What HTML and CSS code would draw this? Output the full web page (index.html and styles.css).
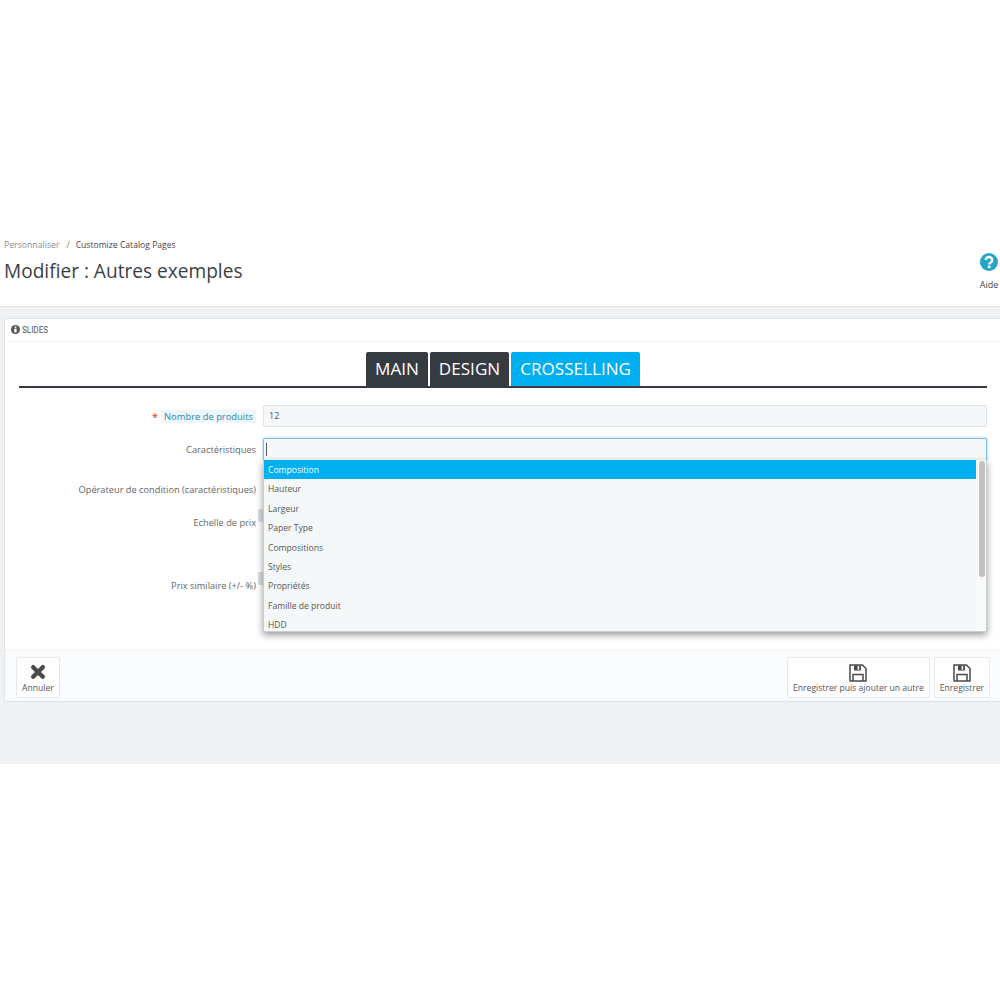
FILE: index.html
```html
<!DOCTYPE html>
<html lang="fr">
<head>
<meta charset="utf-8">
<title>Modifier : Autres exemples</title>
<link rel="stylesheet" href="styles.css">
</head>
<body>
<div class="top-space"></div>
<header class="page-head">
  <div class="head-text">
    <div class="crumbs"><span class="crumb-a">Personnaliser</span><span class="crumb-sep">/</span><span class="crumb-b">Customize Catalog Pages</span></div>
    <h1>Modifier : Autres exemples</h1>
  </div>
  <div class="help">
    <svg class="help-icon" viewBox="0 0 18 18"><circle cx="9" cy="9" r="9" fill="#25a5c7"/><path d="M5.8 7a3.2 3 0 1 1 4.9 2.5c-1.1.7-1.5 1.1-1.5 2.1" fill="none" stroke="#fff" stroke-width="2.4"/><rect x="7.9" y="12.6" width="2.6" height="2.5" fill="#fff"/></svg>
    <span>Aide</span>
  </div>
</header>
<main class="content">
  <section class="panel">
    <div class="panel-head">
      <svg class="info" viewBox="0 0 10 10"><circle cx="5" cy="5" r="5" fill="#555"/><rect x="4" y="1.6" width="2" height="1.6" fill="#fff"/><rect x="3.6" y="4" width="2.6" height="4.2" fill="#fff"/></svg>
      <span class="panel-title">SLIDES</span>
    </div>
    <div class="tabs">
      <div class="tab">MAIN</div>
      <div class="tab">DESIGN</div>
      <div class="tab tab-on">CROSSELLING</div>
    </div>
    <div class="form">
      <div class="row row-1">
        <div class="label"><span class="req">*</span><span class="hint">Nombre de produits</span></div>
        <div class="input">12</div>
      </div>
      <div class="row row-2">
        <div class="label">Caractéristiques</div>
        <div class="field">
          <div class="input focus"><span class="caret"></span></div>
          <div class="dropdown">
            <ul class="options">
              <li class="opt-on">Composition</li>
              <li>Hauteur</li>
              <li>Largeur</li>
              <li>Paper Type</li>
              <li>Compositions</li>
              <li>Styles</li>
              <li>Propriétés</li>
              <li>Famille de produit</li>
              <li>HDD</li>
            </ul>
            <div class="scroll"><div class="thumb"></div></div>
          </div>
        </div>
      </div>
      <div class="row row-3"><div class="label">Opérateur de condition (caractéristiques)</div></div>
      <div class="row row-4"><div class="label">Echelle de prix</div><div class="nub"></div></div>
      <div class="row row-5"><div class="label">Prix similaire (+/- %)</div><div class="nub"></div></div>
    </div>
    <footer class="panel-foot">
      <div class="btn">
        <svg class="ico-x" viewBox="0 0 16 16"><path d="M3.2 3.2 12.8 12.8M12.8 3.2 3.2 12.8" stroke="#4a4a4a" stroke-width="4.4" stroke-linecap="round"/></svg>
        <span>Annuler</span>
      </div>
      <div class="btn-group">
        <div class="btn">
          <svg class="ico-save" viewBox="0 0 18 18"><path d="M1 1H13.5L17 4.5V17H1Z" fill="none" stroke="#4a4a4a" stroke-width="1.5"/><path d="M5 1.5H12V6.5H5Z" fill="#4a4a4a"/><rect x="8.6" y="2.2" width="1.6" height="3.4" fill="#fff"/><path d="M4 17V10.5H14V17" fill="none" stroke="#4a4a4a" stroke-width="1.5"/></svg>
          <span>Enregistrer puis ajouter un autre</span>
        </div>
        <div class="btn">
          <svg class="ico-save" viewBox="0 0 18 18"><path d="M1 1H13.5L17 4.5V17H1Z" fill="none" stroke="#4a4a4a" stroke-width="1.5"/><path d="M5 1.5H12V6.5H5Z" fill="#4a4a4a"/><rect x="8.6" y="2.2" width="1.6" height="3.4" fill="#fff"/><path d="M4 17V10.5H14V17" fill="none" stroke="#4a4a4a" stroke-width="1.5"/></svg>
          <span>Enregistrer</span>
        </div>
      </div>
    </footer>
  </section>
</main>
</body>
</html>
```
FILE: styles.css
```css
* { box-sizing: border-box; }
html, body { margin: 0; padding: 0; background: #fff; }
body { font-family: "Open Sans", "Noto Sans", sans-serif; color: #555; font-size: 9px; height: 1000px; overflow: hidden; }
.top-space { height: 238px; }
.page-head { height: 68px; display: flex; justify-content: space-between; padding: 0 1px 0 4px; }
.crumbs { font-size: 8.7px; line-height: 14px; display: flex; }
.crumb-a { color: #8a8a8a; }
.crumb-sep { color: #5a9a4a; margin: 0 6px 0 7px; }
.crumb-b { color: #444; font-size: 8.6px; }
h1 { margin: 5px 0 0; font-weight: 400; font-size: 19.1px; line-height: 28px; color: #3a3f44; }
.help { width: 20px; display: flex; flex-direction: column; align-items: center; padding-top: 15px; color: #444; font-size: 9px; }
.help-icon { width: 18px; height: 18px; display: block; margin-bottom: 7px; }
.content { background: #eff1f2; border-top: 1px solid #e4e6e8; height: 458px; padding: 11px 0 0 4px; }
.panel { background: #fff; border: 1px solid #dfe2e4; border-right: 0; border-radius: 3px 0 0 3px; height: 384px; display: flex; flex-direction: column; }
.panel-head { height: 23px; margin-left: 3px; border-bottom: 1px solid #f1f2f3; display: flex; align-items: center; gap: 2px; padding: 0 0 2px 3px; }
.panel-title { font-family: "Roboto", sans-serif; font-size: 9.5px; color: #555; transform: scaleX(.85); transform-origin: left center; }
.info { width: 9px; height: 9px; display: block; }
.tabs { height: 46px; margin: 0 13px 0 14px; border-bottom: 2px solid #363a41; display: flex; justify-content: center; align-items: flex-end; gap: 2px; }
.tab { height: 34px; background: #363a41; color: #fff; font-size: 17.1px; line-height: 34px; padding: 0 9px; border-radius: 2px 2px 0 0; }
.tab-on { background: #00aff0; }
.form { flex: 1; padding-right: 13px; }
.row { display: flex; }
.label { width: 251px; text-align: right; color: #666; font-size: 9.25px; flex: none; }
.row-1 { margin-top: 17px; height: 22px; align-items: center; }
.row-1 .label { display: flex; justify-content: flex-end; align-items: center; }
.req { color: #e0262e; font-size: 11px; margin-right: 3px; }
.hint { background: #eef6fa; color: #2a8ab5; padding: 0 3px; line-height: 13px; font-size: 9.4px; }
.input { flex: 1; height: 22px; background: #f5f8f9; border: 1px solid #dbe2e6; border-radius: 2px; margin-left: 7px; padding-left: 5px; line-height: 20px; font-size: 9px; color: #555; }
.row-2 { margin-top: 11px; height: 22px; align-items: flex-start; }
.row-2 .label { line-height: 24px; }
.field { flex: 1; position: relative; height: 22px; }
.focus { border-color: #7fbfe8; box-shadow: 0 0 3px rgba(100,180,235,.7); display: flex; align-items: center; padding-left: 2px; height: 23px; }
.caret { width: 1px; height: 13px; background: #555; display: block; }
.dropdown { position: absolute; left: 7px; right: 0; top: 22px; height: 172px; background: #f5f8f9; border: 1px solid #c8cdd0; border-top: 0; box-shadow: 0 3px 7px rgba(0,0,0,.4); display: flex; z-index: 2; overflow: hidden; }
.options { list-style: none; margin: 0; padding: 0; flex: 1; min-width: 0; }
.options li { height: 19.4px; line-height: 19.4px; padding: 1px 0 0 4px; font-size: 8.6px; color: #555; }
.options .opt-on { background: #00aff0; color: #fff; }
.scroll { width: 10px; background: #f8f9fa; padding: 1px 1px 0 3px; flex: none; }
.thumb { height: 116px; background: #c1c1c1; border-radius: 3px; }
.row-3 { margin-top: 23px; height: 14px; line-height: 14px; }
.row-4 { margin-top: 19px; height: 14px; line-height: 14px; }
.row-5 { margin-top: 49px; height: 14px; line-height: 14px; }
.nub { width: 6px; height: 13px; margin: -7px 0 0 2px; background: #dcdfe1; border-radius: 2px 0 0 2px; }
.panel-foot { height: 51px; background: #fbfcfd; border-top: 1px solid #eff1f2; display: flex; justify-content: space-between; padding: 6px 10px 4px 11px; }
.btn { height: 41px; background: #fff; border: 1px solid #e6e8ea; border-radius: 2px; display: flex; flex-direction: column; align-items: center; padding: 6px 5px 0; font-size: 8.6px; color: #555; line-height: 13px; }
.btn-group { display: flex; gap: 4px; }
.ico-x { width: 16px; height: 16px; display: block; margin-bottom: 2px; }
.ico-save { width: 18px; height: 18px; display: block; }
```
